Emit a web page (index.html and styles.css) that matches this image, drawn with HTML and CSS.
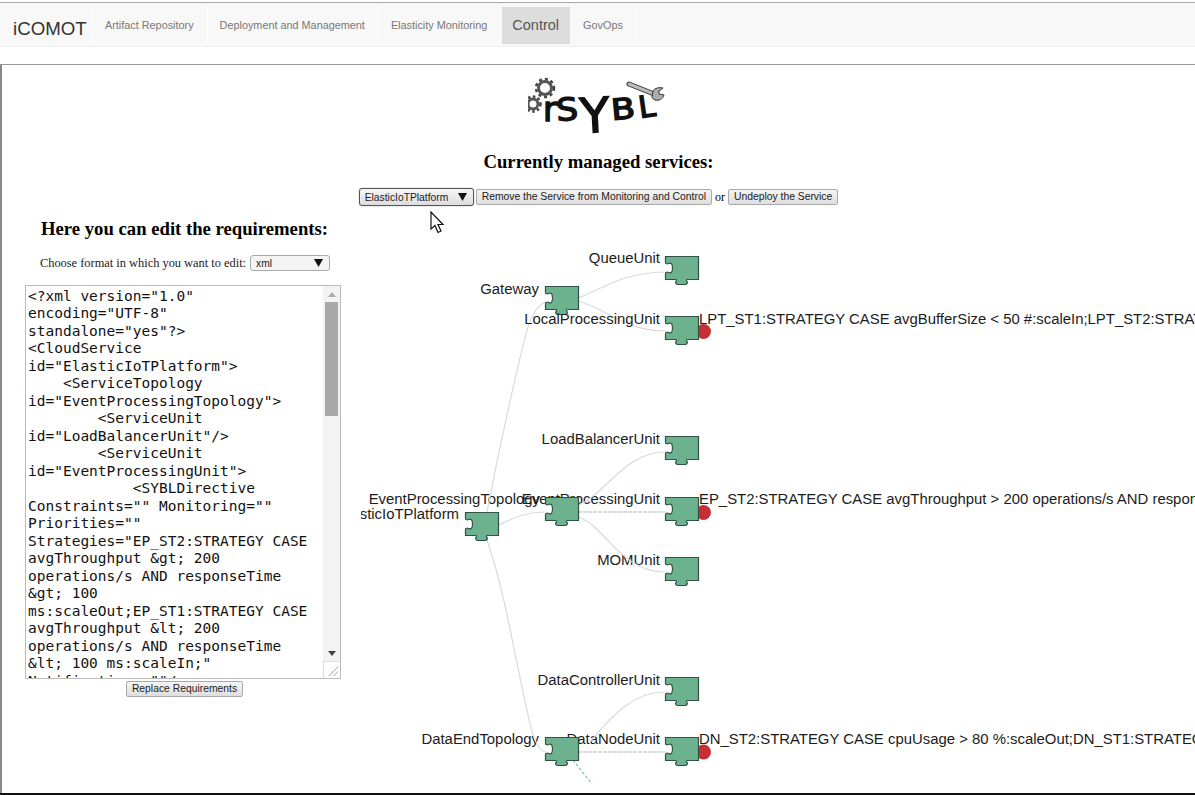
FILE: index.html
```html
<!DOCTYPE html>
<html lang="en">
<head>
  <meta charset="UTF-8" />
  <title>iCOMOT - Control</title>
  <link rel="stylesheet" href="styles.css">
</head>
<body>

  <header class="navbar">
    <div class="brand">iCOMOT</div>
    <nav class="tabs">
      <a class="tab" href="#artifacts">Artifact Repository</a>
      <a class="tab" href="#deploy">Deployment and Management</a>
      <a class="tab" href="#monitoring">Elasticity Monitoring</a>
      <a class="tab tab-active" href="#control">Control</a>
      <a class="tab" href="#govops">GovOps</a>
    </nav>
  </header>

  <main class="frame">
    <section class="top">
      <svg class="logo" viewBox="530 76 142 60" width="142" height="60">
        <!-- gears -->
        <circle class="gear" cx="547" cy="87" r="6.500" />
        <circle class="gear-teeth" cx="547" cy="87" r="9" />
        <circle class="gear" cx="535" cy="103" r="5" />
        <circle class="gear-teeth small" cx="535" cy="103" r="7.500" />
        <!-- wrench -->
        <path class="wrench-edge" d="M631 83L656 93" />
        <path class="wrench-core" d="M631 83L656 93" />
        <path class="wrench-head" d="M655 90c2-3 6-4 10-3l-4 3 0 3 5 1c-1 4-5 6-9 5-2-1-3-2-3-3z" />
        <text class="logo-letter" transform="translate(545 120)" font-size="34">r</text>
        <text class="logo-letter" transform="translate(559 120) rotate(-4) scale(1.100 1)" font-size="31">S</text>
        <text class="logo-letter" transform="translate(583 132) rotate(-3)" font-size="48">Y</text>
        <text class="logo-letter" transform="translate(614 119) rotate(-5) scale(1.200 1)" font-size="29">B</text>
        <text class="logo-letter" transform="translate(642 117) rotate(-8)" font-size="30">L</text>
      </svg>
      <h2 class="top-title">Currently managed services:</h2>
      <div class="service-controls">
        <select class="select select-service">
          <option>ElasticIoTPlatform</option>
          <option>DataEndTopology</option>
        </select>
        <button class="btn">Remove the Service from Monitoring and Control</button>
        <span class="or">or</span>
        <button class="btn">Undeploy the Service</button>
      </div>
    </section>

    <section class="workspace">
      <aside class="editor">
        <h2 class="editor-title">Here you can edit the requirements:</h2>
        <div class="format-row">
          <label for="format">Choose format in which you want to edit:</label>
          <select id="format" class="select select-format">
            <option>xml</option>
            <option>json</option>
          </select>
        </div>
        <div class="req-box">
          <textarea class="req-text" spellcheck="false">&lt;?xml version="1.0" encoding="UTF-8" standalone="yes"?&gt;
&lt;CloudService id="ElasticIoTPlatform"&gt;
    &lt;ServiceTopology id="EventProcessingTopology"&gt;
        &lt;ServiceUnit id="LoadBalancerUnit"/&gt;
        &lt;ServiceUnit id="EventProcessingUnit"&gt;
            &lt;SYBLDirective Constraints="" Monitoring="" Priorities="" Strategies="EP_ST2:STRATEGY CASE avgThroughput &amp;gt; 200 operations/s AND responseTime &amp;gt; 100 ms:scaleOut;EP_ST1:STRATEGY CASE avgThroughput &amp;lt; 200 operations/s AND responseTime &amp;lt; 100 ms:scaleIn;" Notifications=""/&gt;
        &lt;/ServiceUnit&gt;
        &lt;ServiceUnit id="MOMUnit"/&gt;
    &lt;/ServiceTopology&gt;
&lt;/CloudService&gt;</textarea>
          <div class="scrollbar">
            <div class="sb-btn sb-up"></div>
            <div class="sb-track"><div class="sb-thumb"></div></div>
            <div class="sb-btn sb-down"></div>
            <svg class="sb-grip" viewBox="0 0 17 17" width="17" height="17">
              <path d="M5 15L15 5M10 15L15 10" />
            </svg>
          </div>
        </div>
        <button class="btn btn-replace">Replace Requirements</button>
      </aside>

      <svg class="diagram" viewBox="361 210 834 583" width="834" height="583">
        <defs>
          <path id="piece" d="M.5.5H33.5V23.5H22.5c-1 0-1.500 1-.5 2c1 1 0 3-2 3h-7c-2 0-3-2-2-3c1-1 .5-2-.5-2H.5V17.500c0-1.500 2-1.500 3-1c2 1 4 .5 4-4.500c0-5-2-5.500-4-4.500c-1 .5-3 .5-3-1Z" />
        </defs>

        <text class="label" x="660" y="263" text-anchor="end">QueueUnit</text>
        <text class="label" x="539" y="294" text-anchor="end">Gateway</text>
        <text class="label" x="660" y="444" text-anchor="end">LoadBalancerUnit</text>
        <text class="label" x="660" y="504" text-anchor="end">EventProcessingUnit</text>
        <text class="label" x="540" y="504" text-anchor="end">EventProcessingTopology</text>
        <text class="label" x="459" y="519" text-anchor="end">ElasticIoTPlatform</text>
        <text class="label" x="660" y="565" text-anchor="end">MOMUnit</text>
        <text class="label" x="660" y="685" text-anchor="end">DataControllerUnit</text>
        <text class="label" x="660" y="744" text-anchor="end">DataNodeUnit</text>
        <text class="label" x="539" y="744" text-anchor="end">DataEndTopology</text>

        <path class="link" d="M578 298C605 288 620 273 665 272" />
        <path class="link" d="M578 301C610 310 625 331 665 331" />
        <path class="link" d="M487 512C495 470 510 400 520 358C527 330 530 310 545 302" />
        <path class="link" d="M498 525C515 518 525 512 545 512" />
        <path class="link" d="M487 540C508 600 520 690 533 735C537 747 541 751 546 752" />
        <path class="link" d="M578 505C605 495 625 452 665 452" />
        <path class="link link-heavy" d="M578 512H665" />
        <path class="link" d="M578 517C605 525 620 572 665 572" />
        <path class="link" d="M590 742C615 712 635 692 665 692" />
        <path class="link link-heavy" d="M578 752H665" />
        <path class="link-green" d="M573 760L592 784" />

        <use class="piece" href="#piece" x="665" y="256" />
        <use class="piece" href="#piece" x="545" y="286" />
        <use class="piece" href="#piece" x="665" y="436" />
        <use class="piece" href="#piece" x="545" y="497" />
        <use class="piece" href="#piece" x="465" y="512" />
        <use class="piece" href="#piece" x="665" y="557" />
        <use class="piece" href="#piece" x="665" y="677" />
        <use class="piece" href="#piece" x="545" y="737" />

        <text class="label" x="660" y="324" text-anchor="end">LocalProcessingUnit</text>

        <circle class="alert" cx="703.500" cy="331.500" r="7.500" />
        <use class="piece" href="#piece" x="665" y="316" />
        <circle class="alert" cx="703.500" cy="512.500" r="7.500" />
        <use class="piece" href="#piece" x="665" y="497" />
        <circle class="alert" cx="703.500" cy="752" r="7.500" />
        <use class="piece" href="#piece" x="665" y="737" />

        <text class="label" x="699" y="324">LPT_ST1:STRATEGY CASE avgBufferSize &lt; 50 #:scaleIn;LPT_ST2:STRATEGY CASE avgBufferSize &gt; 200 #:scaleOut</text>
        <text class="label" x="699" y="504">EP_ST2:STRATEGY CASE avgThroughput &gt; 200 operations/s AND responseTime &gt; 100 ms:scaleOut</text>
        <text class="label" x="699" y="744">DN_ST2:STRATEGY CASE cpuUsage &gt; 80 %:scaleOut;DN_ST1:STRATEGY CASE cpuUsage &lt; 40 %:scaleIn</text>
      </svg>
    </section>
  </main>

  <svg class="pointer" viewBox="0 0 15 23" width="15" height="23">
    <path d="M1 1V18L5 14.500L8 21.500L11 20L8 13.500H13Z" />
  </svg>

</body>
</html>
```

FILE: styles.css
```css
html, body {
  height: 795px;
  overflow: hidden;
}

body {
  box-sizing: border-box;
  position: relative;
  margin: 0;
  padding-top: 2px;
  background-color: #ffffff;
  color: #000000;
  font-family: "Liberation Serif", serif;
  border-bottom: 2px solid #111111;
}

.navbar {
  box-sizing: border-box;
  display: flex;
  align-items: stretch;
  height: 45px;
  padding: 4px 0 2px;
  background-color: #f8f8f8;
  border-top: 1px solid #a9a9a9;
  border-bottom: 1px solid #eeeeee;
  font-family: "Liberation Sans", Arial, sans-serif;
}

.brand {
  box-sizing: border-box;
  width: 92px;
  padding: 11px 0 0 13px;
  font-size: 18.700px;
  line-height: 21px;
  color: #333333;
}

.tabs {
  display: flex;
}

.tab {
  display: flex;
  align-items: center;
  padding: 0 12px 2px;
  font-size: 10.850px;
  color: #777777;
  text-decoration: none;
  border-right: 1px solid #fcfcfc;
  border-left: 1px solid #fcfcfc;
}

.tab-active {
  margin-left: 2px;
  padding: 0 10px 2px 9px;
  font-size: 14.500px;
  color: #555555;
  background-color: #dddddd;
  border-color: #dddddd;
}

.frame {
  box-sizing: border-box;
  margin-top: 17px;
  height: 729px;
  border-top: 1px solid #999999;
  border-left: 2px solid #888888;
}

.top {
  display: flex;
  flex-direction: column;
  align-items: center;
  padding-top: 12px;
}

.logo {
  display: block;
}

.logo-letter {
  font-family: "DejaVu Sans", sans-serif;
  fill: #111111;
  stroke: #111111;
  stroke-width: 1.500;
}

.gear {
  fill: none;
  stroke: #555555;
  stroke-width: 3;
}

.gear-teeth {
  fill: none;
  stroke: #444444;
  stroke-width: 2.500;
  stroke-dasharray: 3 3;
}

.gear-teeth.small {
  stroke-dasharray: 2.500 2.500;
}

.wrench-edge {
  stroke: #333333;
  stroke-width: 5;
  stroke-linecap: round;
}

.wrench-core {
  stroke: #b8bcbe;
  stroke-width: 3;
  stroke-linecap: round;
}

.wrench-head {
  fill: #a8acae;
  stroke: #333333;
  stroke-width: 1;
}

.top-title {
  margin: 14px 0 0;
  font-size: 18.700px;
  line-height: 22px;
}

.service-controls {
  display: flex;
  align-items: center;
  margin-top: 15px;
  height: 18px;
  font-size: 12px;
}

.or {
  margin: 0 3px;
}

.select {
  appearance: none;
  height: 18px;
  padding: 0 0 0 5px;
  font-family: "Liberation Sans", Arial, sans-serif;
  font-size: 10.300px;
  color: #222222;
  border: 1px solid #aaaaaa;
  border-radius: 3px;
  background: url("data:image/svg+xml,%3Csvg xmlns='http://www.w3.org/2000/svg' width='9' height='8'%3E%3Cpath d='M0 0H9L4.500 8Z' fill='%23111'/%3E%3C/svg%3E") no-repeat right 6px center, linear-gradient(#f6f6f6, #dddddd);
}

.select-service {
  width: 115px;
  margin-right: 2px;
  border: 1px solid #555555;
  box-shadow: 0 0 1px #555555;
}

.select-format {
  width: 80px;
  height: 16px;
  margin-left: 4px;
  background: url("data:image/svg+xml,%3Csvg xmlns='http://www.w3.org/2000/svg' width='9' height='8'%3E%3Cpath d='M0 0H9L4.500 8Z' fill='%23111'/%3E%3C/svg%3E") no-repeat right 6px center, #f4f4f4;
}

.btn {
  height: 16px;
  padding: 0 5px;
  font-family: "Liberation Sans", Arial, sans-serif;
  font-size: 10.350px;
  line-height: 14px;
  color: #222222;
  white-space: nowrap;
  border: 1px solid #aaaaaa;
  border-radius: 2px;
  background: linear-gradient(#f5f5f5, #dedede);
}

.workspace {
  display: flex;
  align-items: flex-start;
  margin-top: 4px;
}

.editor {
  flex: 0 0 359px;
  display: flex;
  flex-direction: column;
  align-items: center;
  padding-top: 7px;
}

.editor-title {
  margin: 0 0 0 6px;
  font-size: 18.700px;
  line-height: 24px;
}

.format-row {
  display: flex;
  align-items: center;
  margin: 14px 0 0 7px;
  font-size: 12.400px;
  color: #222222;
}

.req-box {
  box-sizing: border-box;
  display: flex;
  width: 316px;
  height: 394px;
  margin: 14px 0 0 3px;
  border: 1px solid #bbbbbb;
}

.req-text {
  box-sizing: border-box;
  flex: 1;
  min-width: 0;
  padding: 1.500px 2px 0;
  border: none;
  overflow: hidden;
  resize: none;
  font-family: "DejaVu Sans Mono", monospace;
  font-size: 14.500px;
  line-height: 17.500px;
  color: #111111;
  background-color: #ffffff;
  outline: none;
}

.scrollbar {
  flex: 0 0 17px;
  display: flex;
  flex-direction: column;
  background-color: #f3f3f3;
}

.sb-btn {
  flex: 0 0 16px;
  display: flex;
  align-items: center;
  justify-content: center;
}

.sb-up::before {
  content: "";
  border: 4px solid transparent;
  border-top: none;
  border-bottom: 5px solid #aaaaaa;
}

.sb-down::before {
  content: "";
  border: 4px solid transparent;
  border-bottom: none;
  border-top: 5px solid #444444;
}

.sb-track {
  flex: 1;
}

.sb-thumb {
  height: 114px;
  margin: 0 2px;
  background-color: #a9a9a9;
}

.sb-grip {
  display: block;
  flex: none;
  background-color: #ffffff;
  border-top: 1px solid #dddddd;
  border-left: 1px solid #dddddd;
  box-sizing: border-box;
}

.sb-grip path {
  fill: none;
  stroke: #999999;
  stroke-width: 1;
}

.btn-replace {
  width: 117px;
  margin: 2px 0 0 6px;
  padding: 0;
}

.diagram {
  display: block;
  flex: none;
}

.label {
  font-family: "Liberation Sans", Arial, sans-serif;
  font-size: 14.900px;
  fill: #1c1c1c;
}

.link {
  fill: none;
  stroke: #dadada;
  stroke-width: 1.200;
}

.link-heavy {
  stroke-width: 2;
  stroke-dasharray: 4 1;
}

.link-green {
  fill: none;
  stroke: #7fc4ab;
  stroke-width: 1.200;
  stroke-dasharray: 3 2;
}

.piece {
  fill: #6cb28e;
  stroke: #2f5244;
  stroke-width: 1.200;
}

.alert {
  fill: #c62f33;
}

.pointer {
  position: absolute;
  left: 430px;
  top: 211px;
}

.pointer path {
  fill: #ffffff;
  stroke: #111111;
  stroke-width: 1.200;
}
```
